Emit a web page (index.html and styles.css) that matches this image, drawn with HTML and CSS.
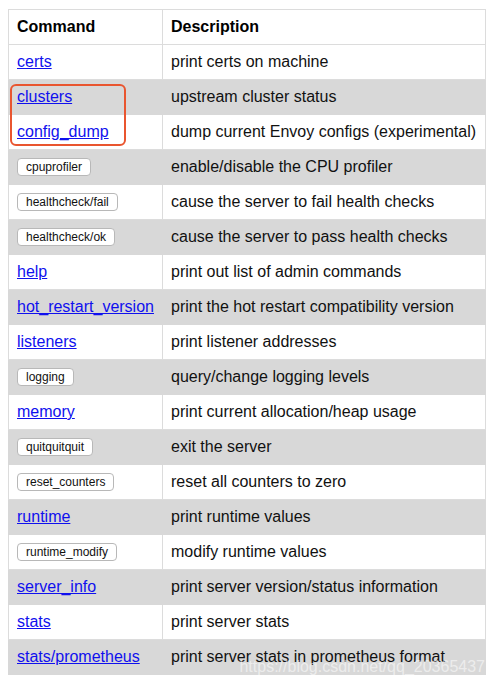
FILE: index.html
```html
<!DOCTYPE html>
<html>
<head>
<meta charset="utf-8">
<link rel="stylesheet" href="styles.css">
</head>
<body>
<div class="wrap">
<table class="admin">
<thead>
<tr><th class="c1">Command</th><th>Description</th></tr>
</thead>
<tbody>
<tr><td class="c1"><a href="#">certs</a></td><td>print certs on machine</td></tr>
<tr><td class="c1"><a href="#">clusters</a></td><td>upstream cluster status</td></tr>
<tr><td class="c1"><a href="#">config_dump</a></td><td>dump current Envoy configs (experimental)</td></tr>
<tr><td class="c1"><span class="btn">cpuprofiler</span></td><td>enable/disable the CPU profiler</td></tr>
<tr><td class="c1"><span class="btn">healthcheck/fail</span></td><td>cause the server to fail health checks</td></tr>
<tr><td class="c1"><span class="btn">healthcheck/ok</span></td><td>cause the server to pass health checks</td></tr>
<tr><td class="c1"><a href="#">help</a></td><td>print out list of admin commands</td></tr>
<tr><td class="c1"><a href="#">hot_restart_version</a></td><td>print the hot restart compatibility version</td></tr>
<tr><td class="c1"><a href="#">listeners</a></td><td>print listener addresses</td></tr>
<tr><td class="c1"><span class="btn">logging</span></td><td>query/change logging levels</td></tr>
<tr><td class="c1"><a href="#">memory</a></td><td>print current allocation/heap usage</td></tr>
<tr><td class="c1"><span class="btn">quitquitquit</span></td><td>exit the server</td></tr>
<tr><td class="c1"><span class="btn">reset_counters</span></td><td>reset all counters to zero</td></tr>
<tr><td class="c1"><a href="#">runtime</a></td><td>print runtime values</td></tr>
<tr><td class="c1"><span class="btn">runtime_modify</span></td><td>modify runtime values</td></tr>
<tr><td class="c1"><a href="#">server_info</a></td><td>print server version/status information</td></tr>
<tr><td class="c1"><a href="#">stats</a></td><td>print server stats</td></tr>
<tr><td class="c1"><a href="#">stats/prometheus</a></td><td>print server stats in prometheus format</td></tr>
</tbody>
</table>
<div class="highlight"></div>
<div class="watermark">https://blog.csdn.net/qq_20365437</div>
</div>
</body>
</html>
```

FILE: styles.css
```css
html, body {
  margin: 0;
  padding: 0;
  background: #ffffff;
}
body {
  padding: 9px 8px 0 8px;
  font-family: "Liberation Sans", Arial, Helvetica, sans-serif;
  font-size: 16px;
  color: #111111;
}
.wrap {
  position: relative;
  width: 478px;
}
.admin {
  border-collapse: collapse;
  width: 478px;
  table-layout: fixed;
}
.admin th, .admin td {
  border: 1px solid #dcdcdc;
  height: 34px;
  padding: 0 0 0 8px;
  text-align: left;
  vertical-align: middle;
  white-space: nowrap;
  line-height: 18px;
}
.admin th.c1, .admin td.c1 {
  width: 145px;
}
.admin th {
  font-weight: bold;
  color: #000;
}
.admin tbody tr:nth-child(even) td {
  background: #d8d8d8;
  border-color: #d8d8d8;
}
.admin tbody tr:nth-child(even) {
  background: #d8d8d8;
}
.admin a {
  color: #1010ee;
  text-decoration: underline;
}
.btn {
  display: inline-block;
  font-size: 12px;
  line-height: 16px;
  height: 16px;
  padding: 0 8px;
  border: 1px solid #b8b8b8;
  border-radius: 4px;
  background: #ffffff;
  color: #111;
  vertical-align: middle;
}
.highlight {
  position: absolute;
  left: 2px;
  top: 75px;
  width: 112px;
  height: 58px;
  border: 2px solid #e9552f;
  border-radius: 6px;
}
.watermark {
  position: absolute;
  right: 1px;
  top: 649px;
  font-size: 16px;
  line-height: 18px;
  color: rgba(255, 255, 255, 0.55);
  white-space: nowrap;
}
```
